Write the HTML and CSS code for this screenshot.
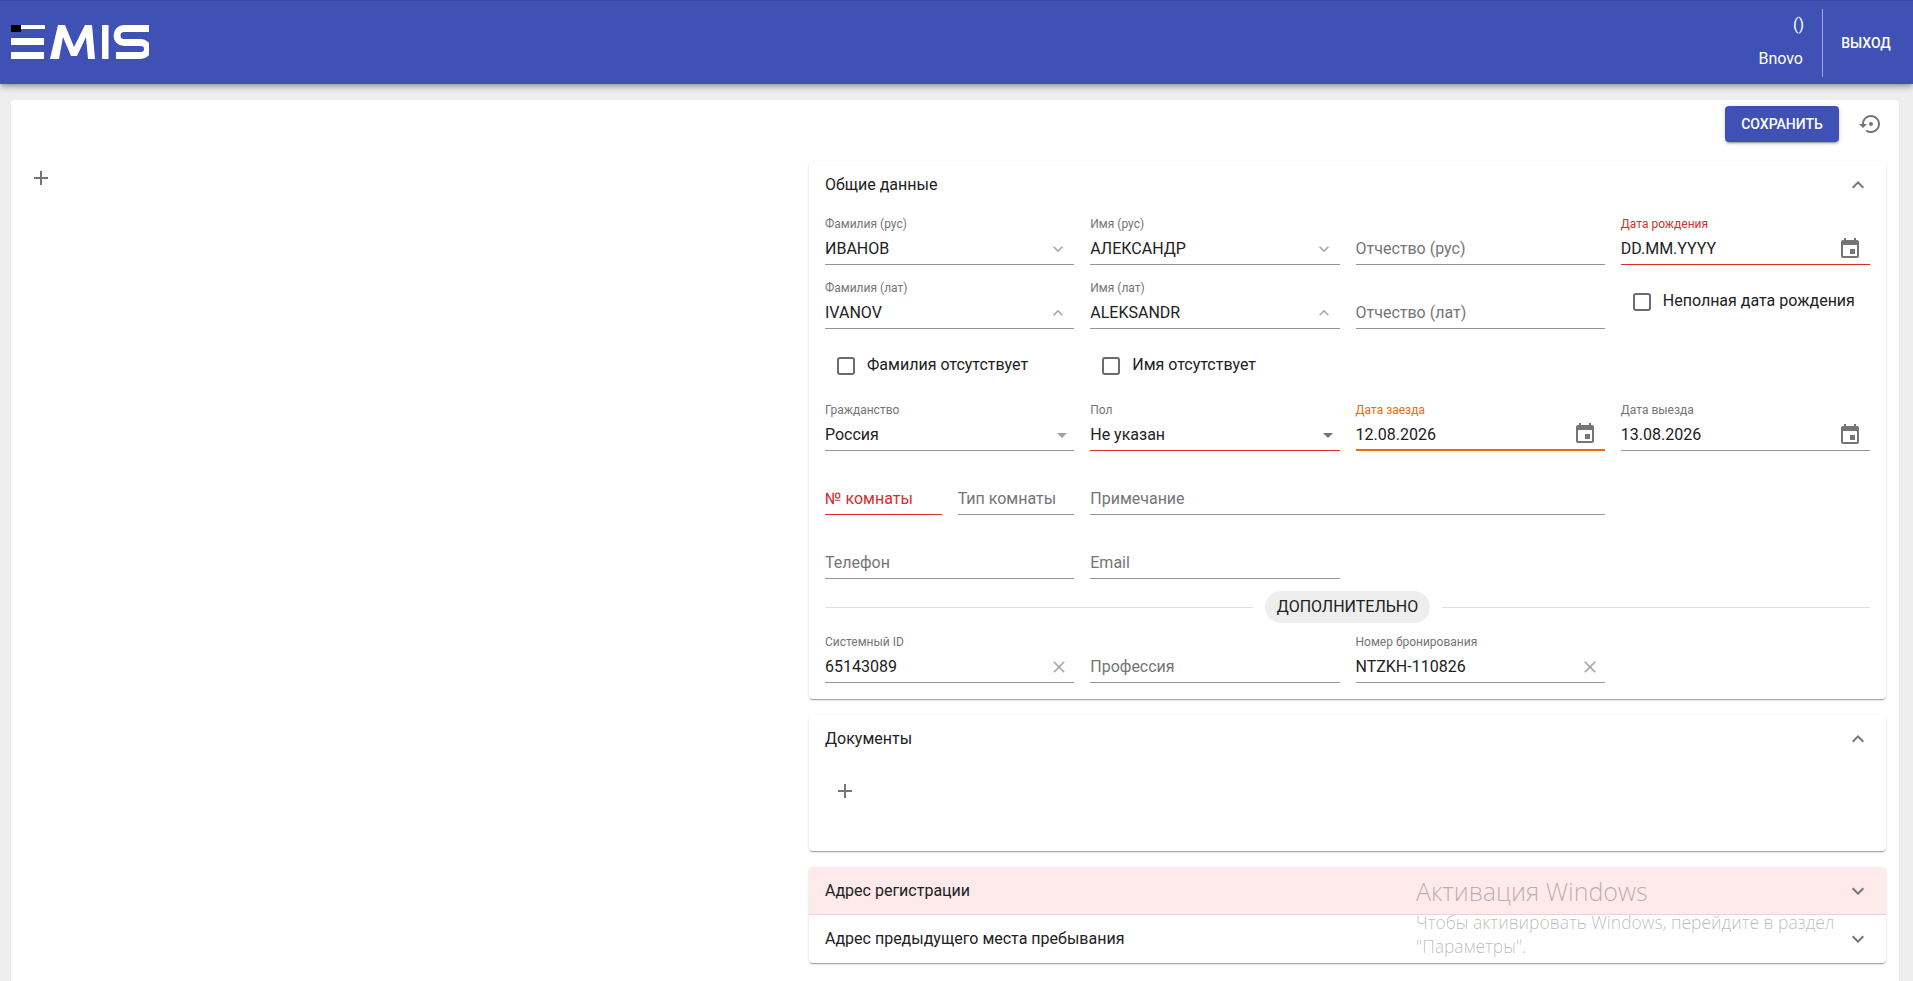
FILE: index.html
```html
<!DOCTYPE html>
<html lang="ru">
<head>
<meta charset="utf-8">
<title>EMIS</title>
<link rel="stylesheet" href="styles.css">
</head>
<body>
<svg class="sprite" width="0" height="0" aria-hidden="true">
  <symbol id="i-more" viewBox="0 0 24 24"><path d="M16.59 8.59L12 13.17 7.41 8.59 6 10l6 6 6-6z"/></symbol>
  <symbol id="i-less" viewBox="0 0 24 24"><path d="M12 8l-6 6 1.41 1.41L12 10.83l4.59 4.58L18 14z"/></symbol>
  <symbol id="i-drop" viewBox="0 0 24 24"><path d="M7 10l5 5 5-5z"/></symbol>
  <symbol id="i-cal" viewBox="0 0 24 24"><path d="M17 12h-5v5h5v-5zM16 1v2H8V1H6v2H5c-1.11 0-1.99.9-1.99 2L3 19c0 1.1.89 2 2 2h14c1.1 0 2-.9 2-2V5c0-1.1-.9-2-2-2h-1V1h-2zm3 18H5V8h14v11z"/></symbol>
  <symbol id="i-close" viewBox="0 0 24 24"><path d="M19 6.41L17.59 5 12 10.59 6.41 5 5 6.41 10.59 12 5 17.59 6.41 19 12 13.41 17.59 19 19 17.59 13.41 12 19 6.41z"/></symbol>
  <symbol id="i-plus" viewBox="0 0 24 24"><path d="M19 13h-6v6h-2v-6H5v-2h6V5h2v6h6v2z"/></symbol>
  <symbol id="i-restore" viewBox="0 0 24 24"><path d="M14 12c0-1.1-.9-2-2-2s-2 .9-2 2 .9 2 2 2 2-.9 2-2zm-2-9c-4.97 0-9 4.03-9 9H0l4 4 4-4H5c0-3.87 3.13-7 7-7s7 3.13 7 7-3.13 7-7 7c-1.51 0-2.91-.49-4.06-1.3l-1.42 1.44C8.04 20.3 9.94 21 12 21c4.97 0 9-4.03 9-9s-4.03-9-9-9z"/></symbol>
</svg>

<header class="topbar">
  <svg class="logo" viewBox="0 0 138 34" width="138" height="34" role="img" aria-label="EMIS">
    <rect class="logo-black" x="0" y="0" width="10" height="7"/>
    <rect x="10" y="0" width="24" height="4"/>
    <rect x="0" y="13" width="33" height="7"/>
    <rect x="0" y="27" width="33" height="7"/>
    <path d="M39 34L47 0h7l9 22L74 0h7l3 34h-7l-2-22-9 19h-6l-8-19-4 22z"/>
    <rect x="91" y="0" width="6.500" height="34"/>
    <path class="logo-s" d="M138 3.500H113a7 7 0 0 0 0 14H130a6.500 6.500 0 0 1 0 13H105"/>
  </svg>
  <div class="user">
    <span class="user-count">()</span>
    <span class="user-name">Bnovo</span>
  </div>
  <div class="exit"><a class="exit-link">Выход</a></div>
</header>

<main class="sheet">
  <div class="actions">
    <button class="btn-save">Сохранить</button>
    <svg class="icon icon-restore"><use href="#i-restore"/></svg>
  </div>
  <div class="content">
    <aside class="side">
      <svg class="icon icon-plus"><use href="#i-plus"/></svg>
    </aside>
    <div class="panels">
      <section class="panel">
        <div class="panel-head">
          <span class="panel-title">Общие данные</span>
          <svg class="icon icon-chev"><use href="#i-less"/></svg>
        </div>
        <div class="form">
          <div class="field"><label class="f-label">Фамилия (рус)</label><div class="f-control"><span class="f-value">ИВАНОВ</span><svg class="icon icon-sm"><use href="#i-more"/></svg></div></div>
          <div class="field"><label class="f-label">Имя (рус)</label><div class="f-control"><span class="f-value">АЛЕКСАНДР</span><svg class="icon icon-sm"><use href="#i-more"/></svg></div></div>
          <div class="field"><div class="f-control"><span class="f-hint">Отчество (рус)</span></div></div>
          <div class="field is-error"><label class="f-label">Дата рождения</label><div class="f-control"><span class="f-value">DD.MM.YYYY</span><svg class="icon icon-cal"><use href="#i-cal"/></svg></div></div>

          <div class="field"><label class="f-label">Фамилия (лат)</label><div class="f-control"><span class="f-value">IVANOV</span><svg class="icon icon-sm"><use href="#i-less"/></svg></div></div>
          <div class="field"><label class="f-label">Имя (лат)</label><div class="f-control"><span class="f-value">ALEKSANDR</span><svg class="icon icon-sm"><use href="#i-less"/></svg></div></div>
          <div class="field"><div class="f-control"><span class="f-hint">Отчество (лат)</span></div></div>
          <div class="check check-top"><span class="check-box"></span><span class="check-text">Неполная дата рождения</span></div>

          <div class="check"><span class="check-box"></span><span class="check-text">Фамилия отсутствует</span></div>
          <div class="check"><span class="check-box"></span><span class="check-text">Имя отсутствует</span></div>
          <div class="form-blank"></div>
          <div class="form-blank"></div>

          <div class="field"><label class="f-label">Гражданство</label><div class="f-control"><span class="f-value">Россия</span><svg class="icon icon-drop"><use href="#i-drop"/></svg></div></div>
          <div class="field is-error"><label class="f-label plain">Пол</label><div class="f-control"><span class="f-value">Не указан</span><svg class="icon icon-drop dark"><use href="#i-drop"/></svg></div></div>
          <div class="field is-focus"><label class="f-label">Дата заезда</label><div class="f-control"><span class="f-value">12.08.2026</span><svg class="icon icon-cal"><use href="#i-cal"/></svg></div></div>
          <div class="field"><label class="f-label">Дата выезда</label><div class="f-control"><span class="f-value">13.08.2026</span><svg class="icon icon-cal"><use href="#i-cal"/></svg></div></div>

          <div class="split">
            <div class="field is-error"><div class="f-control"><span class="f-hint">№ комнаты</span></div></div>
            <div class="field"><div class="f-control"><span class="f-hint">Тип комнаты</span></div></div>
          </div>
          <div class="field span-2"><div class="f-control"><span class="f-hint">Примечание</span></div></div>
          <div class="form-blank"></div>

          <div class="field"><div class="f-control"><span class="f-hint">Телефон</span></div></div>
          <div class="field"><div class="f-control"><span class="f-hint">Email</span></div></div>
          <div class="form-blank"></div>
          <div class="form-blank"></div>

          <div class="divider"><span class="divider-pill">ДОПОЛНИТЕЛЬНО</span></div>

          <div class="field"><label class="f-label">Системный ID</label><div class="f-control"><span class="f-value">65143089</span><svg class="icon icon-x"><use href="#i-close"/></svg></div></div>
          <div class="field"><div class="f-control"><span class="f-hint">Профессия</span></div></div>
          <div class="field"><label class="f-label">Номер бронирования</label><div class="f-control"><span class="f-value">NTZKH-110826</span><svg class="icon icon-x"><use href="#i-close"/></svg></div></div>
        </div>
      </section>

      <section class="panel panel-docs">
        <div class="panel-head">
          <span class="panel-title">Документы</span>
          <svg class="icon icon-chev"><use href="#i-less"/></svg>
        </div>
        <div class="docs-body"><svg class="icon icon-plus"><use href="#i-plus"/></svg></div>
      </section>

      <section class="panel panel-stack">
        <div class="stack-row is-alert">
          <span class="panel-title">Адрес регистрации</span>
          <svg class="icon icon-chev"><use href="#i-more"/></svg>
        </div>
        <div class="stack-row">
          <span class="panel-title">Адрес предыдущего места пребывания</span>
          <svg class="icon icon-chev"><use href="#i-more"/></svg>
        </div>
      </section>
    </div>
  </div>
</main>

<div class="watermark">
  <div class="wm-title">Активация Windows</div>
  <div class="wm-text">Чтобы активировать Windows, перейдите в раздел<br>"Параметры".</div>
</div>
</body>
</html>
```
FILE: styles.css
```css
* { box-sizing: border-box; }
html, body { height: 100%; }
body {
  margin: 0;
  overflow: hidden;
  background: #eeeeee;
  font-family: Roboto, "Noto Sans", sans-serif;
  font-size: 16px;
  color: #212121;
}
.sprite { position: absolute; }
.icon { display: block; flex: none; width: 24px; height: 24px; fill: #757575; }

.topbar {
  display: flex;
  align-items: center;
  height: 84px;
  padding-left: 11px;
  background: #3f51b5;
  border-top: 1px solid #3a4aa6;
  color: #ffffff;
  box-shadow: 0 2px 4px -1px rgba(0,0,0,.2), 0 4px 5px 0 rgba(0,0,0,.14), 0 1px 10px 0 rgba(0,0,0,.12);
  position: relative;
}
.logo { display: block; fill: #ffffff; margin-top: -2px; }
.logo .logo-black { fill: #000000; }
.logo .logo-s { fill: none; stroke: #ffffff; stroke-width: 7; }
.user {
  margin-left: auto;
  padding-right: 19px;
  display: flex;
  flex-direction: column;
  align-items: flex-end;
  height: 100%;
}
.user-count { font-size: 16px; line-height: 20px; margin-top: 14px; margin-right: -1px; }
.user-name { font-size: 16px; line-height: 20px; margin-top: 14px; }
.exit {
  width: 91px;
  height: 68px;
  display: flex;
  align-items: center;
  justify-content: center;
  padding-right: 4px;
  border-left: 1px solid rgba(255,255,255,.5);
}
.exit-link { font-size: 14px; font-weight: 500; text-transform: uppercase; }

.sheet {
  margin: 16px 14px 0 11px;
  height: 900px;
  background: #ffffff;
  border-radius: 4px 4px 0 0;
  box-shadow: 0 1px 2px rgba(0,0,0,.05);
}
.actions {
  display: flex;
  align-items: center;
  justify-content: flex-end;
  gap: 20px;
  padding: 6px 16px 0 0;
  height: 42px;
}
.btn-save {
  width: 114px;
  height: 36px;
  border: 0;
  border-radius: 4px;
  background: #3f51b5;
  color: #ffffff;
  font: 500 14px Roboto, sans-serif;
  text-transform: uppercase;
  box-shadow: 0 3px 1px -2px rgba(0,0,0,.2), 0 2px 2px 0 rgba(0,0,0,.14), 0 1px 5px 0 rgba(0,0,0,.12);
}
.content {
  display: flex;
  justify-content: space-between;
  margin-top: 19px;
  padding-right: 13px;
}
.side { padding: 5px 0 0 18px; }

.panels { width: 1077px; display: flex; flex-direction: column; gap: 16px; }
.panel {
  background: #ffffff;
  border-radius: 4px;
  box-shadow: 0 2px 1px -1px rgba(0,0,0,.2), 0 1px 1px 0 rgba(0,0,0,.14), 0 1px 3px 0 rgba(0,0,0,.12);
}
.panel-head {
  display: flex;
  align-items: center;
  justify-content: space-between;
  height: 48px;
  padding: 0 16px;
}
.panel-title { font-size: 16px; line-height: 20px; }
.icon-chev { fill: #757575; }

.form {
  display: grid;
  grid-template-columns: repeat(4, 1fr);
  gap: 16px;
  padding: 8px 16px 16px;
}
.form-blank { min-height: 0; }
.span-2 { grid-column: span 2; }
.split { display: grid; grid-template-columns: 1fr 1fr; gap: 16px; }

.field {
  height: 48px;
  display: flex;
  flex-direction: column;
  justify-content: flex-end;
  border-bottom: 1px solid #949494;
  min-width: 0;
}
.f-label { font-size: 12px; line-height: 14px; color: #757575; margin-bottom: 2px; }
.f-control { display: flex; align-items: center; justify-content: space-between; height: 31px; }
.f-value { font-size: 16px; color: #212121; }
.f-hint { font-size: 16px; color: #757575; }
.is-error { border-bottom-color: #d92d2d; }
.is-error .f-label { color: #d92d2d; }
.is-error .f-hint { color: #d92d2d; }
.is-error .f-label.plain { color: #757575; }
.is-focus { border-bottom: 2px solid #ef6c00; }
.is-focus .f-label { color: #ef6c00; }
.is-focus .f-control { height: 30px; }

.icon-sm { width: 20px; height: 20px; fill: #a8a8a8; margin-right: 6px; }
.icon-drop { fill: #a0a0a0; margin-right: 0; }
.icon-drop.dark { fill: #757575; }
.icon-cal { fill: #757575; margin-right: 8px; }
.icon-x { width: 20px; height: 20px; fill: #a8a8a8; margin-right: 5px; }

.check { display: flex; align-items: center; gap: 12px; height: 42px; padding-left: 12px; }
.check-top { align-self: start; }
.check-box { width: 18px; height: 18px; border: 2px solid #6b6b6b; border-radius: 3px; flex: none; }
.check-text { font-size: 16px; line-height: 20px; margin-top: -2px; color: #212121; white-space: nowrap; }

.divider {
  grid-column: 1 / -1;
  margin: -4px 0;
  height: 32px;
  display: flex;
  align-items: center;
  gap: 12px;
}
.divider::before, .divider::after { content: ""; flex: 1; height: 1px; background: #e0e0e0; }
.divider-pill {
  height: 32px;
  line-height: 32px;
  padding: 0 12px;
  border-radius: 16px;
  background: #eeeeee;
  font-size: 16px;
  color: #212121;
}

.panel-docs { height: 136px; }
.docs-body { padding: 16px 0 0 24px; }

.stack-row {
  display: flex;
  align-items: center;
  justify-content: space-between;
  height: 48px;
  padding: 0 16px;
}
.stack-row.is-alert { background: #fee9eb; border-bottom: 1px solid #e5d5d7; border-radius: 4px 4px 0 0; }

.watermark {
  position: absolute;
  left: 1416px;
  top: 872px;
  color: rgba(90,90,90,.42);
  font-family: "Open Sans", sans-serif;
  font-weight: 300;
  pointer-events: none;
}
.wm-title { font-size: 25px; line-height: 38px; }
.wm-text { font-size: 17.500px; line-height: 24px; }
```
